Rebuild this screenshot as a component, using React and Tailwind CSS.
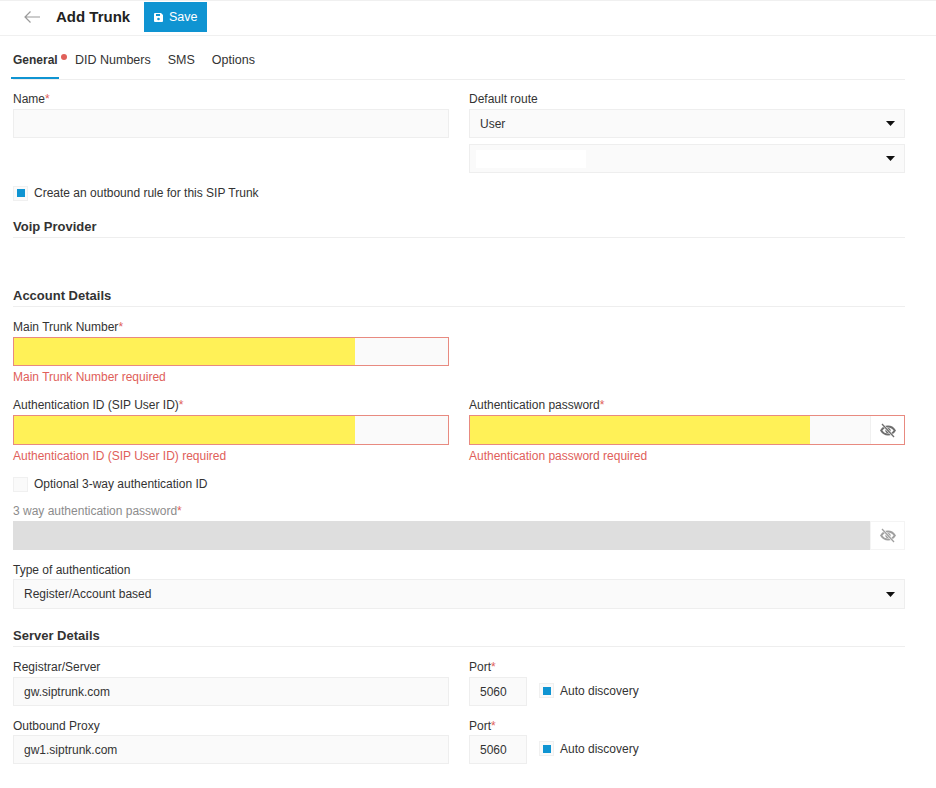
import React from "react";

function Req() {
  return <span className="text-[#e0605a]">*</span>;
}

function Label({ children, req, muted, className = "" }) {
  return (
    <div className={`h-5 text-[12px] leading-[21px] ${muted ? "text-[#8c8c8c]" : "text-[#333]"} ${className}`}>
      {children}
      {req && <Req />}
    </div>
  );
}

function TextInput({ value = "", className = "h-[29px]" }) {
  return (
    <input
      readOnly
      defaultValue={value}
      className={`block w-full border border-[#eeeeee] bg-[#fafafa] px-[10px] text-[12px] text-[#333] outline-none ${className}`}
    />
  );
}

function Select({ value, className = "h-[29px]", children }) {
  return (
    <div className={`relative flex items-center justify-between border border-[#eeeeee] bg-[#fafafa] pl-[10px] pr-[9px] text-[12px] text-[#333] ${className}`}>
      <span>{value}</span>
      {children}
      <svg width="9" height="5" viewBox="0 0 9 5">
        <path d="M0 0h9L4.5 5z" fill="#111" />
      </svg>
    </div>
  );
}

function Error({ children }) {
  return <div className="mt-px h-5 text-[12px] leading-[21px] text-[#e0605a]">{children}</div>;
}

function EyeOff({ color }) {
  return (
    <svg width="16" height="15" viewBox="0 0 16 15" fill="none">
      <path d="M1.200 7.500C2.800 4.900 5.200 3.500 8 3.500s5.200 1.400 6.800 4c-1.600 2.600-4 4-6.800 4s-5.200-1.400-6.800-4z" stroke={color} strokeWidth="2" />
      <circle cx="8" cy="7.500" r="2.600" fill={color} />
      <path d="M2 1l12 13" stroke="#ffffff" strokeWidth="2.400" />
      <path d="M2 1l12 13" stroke={color} strokeWidth="1.300" />
    </svg>
  );
}

function RequiredInput({ width = "w-[341px]", className = "h-[29px]" }) {
  return (
    <div className={`flex border border-[#e88a80] bg-[#fafafa] ${className}`}>
      <div className={`${width} bg-[#fff157]`} />
    </div>
  );
}

function Check({ checked }) {
  return (
    <span className="flex h-[15px] w-[15px] shrink-0 items-center justify-center border border-[#f0f0f0] bg-[#fafafa]">
      {checked && <span className="h-2 w-2 bg-[#0f94d2]" />}
    </span>
  );
}

function CheckRow({ checked, children, className = "" }) {
  return (
    <div className={`flex h-[18px] items-center gap-[6px] text-[12px] text-[#333] ${className}`}>
      <Check checked={checked} />
      <span>{children}</span>
    </div>
  );
}

function Section({ children, className = "" }) {
  return (
    <div className={`h-5 border-b border-[#eeeeee] text-[13px] font-bold leading-[18px] text-[#333] ${className}`}>
      {children}
    </div>
  );
}

function PortRow({ label, value, labelClass = "" }) {
  return (
    <div className="grid grid-cols-2 gap-5">
      <div>
        <Label className={labelClass}>{label}</Label>
        <TextInput value={value} />
      </div>
      <div>
        <Label req className={labelClass}>Port</Label>
        <div className="flex items-center">
          <TextInput value="5060" className="h-[29px] !w-[58px]" />
          <CheckRow checked className="-mt-[2px] ml-3">Auto discovery</CheckRow>
        </div>
      </div>
    </div>
  );
}

export default function App() {
  return (
    <div className="min-h-[788px] bg-white font-['Liberation_Sans',Arial,sans-serif]">
      <header className="flex h-9 items-start border-y border-[#f0f0f0] pl-[24px]">
        <svg width="16" height="12" viewBox="0 0 16 12" fill="none" stroke="#9a9a9a" strokeWidth="1.200" className="mt-[10px]">
          <path d="M16 6H1M6.500 .5L1 6l5.500 5.500" />
        </svg>
        <h1 className="ml-4 mt-[6px] text-[15px] leading-5 font-bold text-[#222]">Add Trunk</h1>
        <button className="ml-[14px] mt-px flex h-[30px] w-[63px] items-center justify-center gap-[6px] bg-[#0f94d2] text-[12.5px] text-white">
          <svg width="9" height="9" viewBox="0 0 9 9">
            <path d="M1 0h6l2 2v6a1 1 0 0 1-1 1H1a1 1 0 0 1-1-1V1a1 1 0 0 1 1-1z" fill="#fff" />
            <rect x="2" y="1" width="4" height="2" fill="#0f94d2" />
            <circle cx="4.500" cy="6" r="1.300" fill="#0f94d2" />
          </svg>
          Save
        </button>
      </header>

      <main className="w-[905px] pl-[13px]">
        <nav className="flex h-[44px] items-center border-b border-[#eeeeee] text-[12.5px] text-[#333]">
          <div className="relative -ml-[2px] flex w-[48px] items-center self-stretch border-b-2 border-[#0f94d2] pl-[2px] pt-[6px] text-[12px] font-bold">
            General
            <span className="absolute left-[50px] top-[18px] h-[6px] w-[6px] rounded-full bg-[#e0605a]" />
          </div>
          <span className="ml-4 mt-[5px]">DID Numbers</span>
          <span className="ml-[17px] mt-[5px]">SMS</span>
          <span className="ml-[17px] mt-[5px]">Options</span>
        </nav>

        <div className="mt-[9px] grid grid-cols-2 gap-5">
          <div>
            <Label req>Name</Label>
            <TextInput />
          </div>
          <div>
            <Label>Default route</Label>
            <Select value="User" />
            <Select className="mt-[6px] h-[29px]">
              <span className="absolute left-[6px] top-[5px] h-[18px] w-[110px] bg-white" />
            </Select>
          </div>
        </div>

        <CheckRow checked className="mt-[11px]">Create an outbound rule for this SIP Trunk</CheckRow>

        <Section className="mt-4">Voip Provider</Section>
        <Section className="mt-[49px]">Account Details</Section>

        <div className="grid grid-cols-2 gap-5">
          <div>
            <Label req className="mt-[10px]">Main Trunk Number</Label>
            <RequiredInput />
            <Error>Main Trunk Number required</Error>
          </div>
        </div>

        <div className="mt-2 grid grid-cols-2 gap-5">
          <div>
            <Label req>Authentication ID (SIP User ID)</Label>
            <RequiredInput className="h-[30px]" />
            <Error>Authentication ID (SIP User ID) required</Error>
          </div>
          <div>
            <Label req>Authentication password</Label>
            <div className="flex h-[30px] border border-[#e88a80] bg-[#fafafa]">
              <div className="w-[340px] bg-[#fff157]" />
              <div className="flex-1" />
              <div className="flex w-[34px] items-center justify-center border-l border-[#f0f0f0] bg-white">
                <EyeOff color="#6e6e6e" />
              </div>
            </div>
            <Error>Authentication password required</Error>
          </div>
        </div>

        <CheckRow className="mt-[9px]">Optional 3-way authentication ID</CheckRow>

        <Label req muted className="mt-2">3 way authentication password</Label>
        <div className="flex h-[29px]">
          <div className="flex-1 bg-[#dedede]" />
          <div className="flex w-[35px] items-center justify-center border border-[#f4f4f4] bg-white">
            <EyeOff color="#a0a0a0" />
          </div>
        </div>

        <Label className="mt-[10px] !h-[19px]">Type of authentication</Label>
        <Select value="Register/Account based" className="h-[30px]" />

        <Section className="mt-[18px]">Server Details</Section>

        <div className="mt-[10px]">
          <PortRow label="Registrar/Server" value="gw.siptrunk.com" />
        </div>
        <div className="mt-[10px]">
          <PortRow label="Outbound Proxy" value="gw1.siptrunk.com" labelClass="!h-[19px]" />
        </div>
      </main>
    </div>
  );
}
